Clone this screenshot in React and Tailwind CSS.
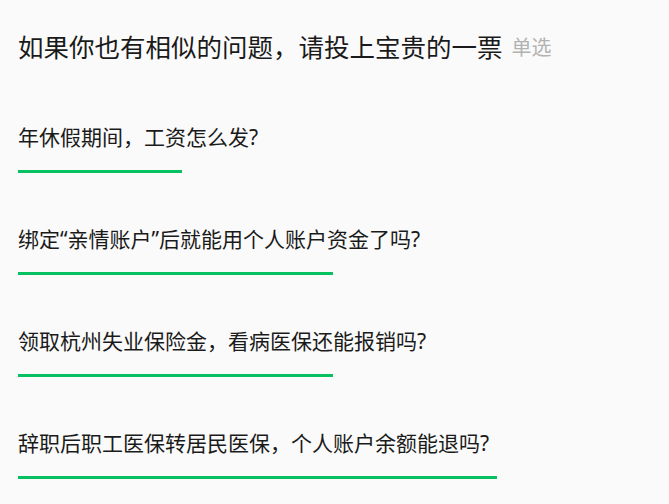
import React from 'react';

const questions = [
  { title: '年休假期间，工资怎么发?', bar: 'w-[164px]' },
  { title: '绑定“亲情账户”后就能用个人账户资金了吗?', bar: 'w-[315px]' },
  { title: '领取杭州失业保险金，看病医保还能报销吗?', bar: 'w-[315px]' },
  { title: '辞职后职工医保转居民医保，个人账户余额能退吗?', bar: 'w-[479px]' },
];

const App = () => {
  return (
    <div
      className="h-screen overflow-hidden w-full bg-[#fafafa] px-[18px] pt-[30px]"
      style={{ fontFamily: '"Noto Sans", "Noto Sans CJK SC", sans-serif' }}
    >
      <div className="flex items-center h-[35px]">
        <h1 className="text-[25.5px] leading-[35px] text-[#1a1a1a] font-normal whitespace-nowrap">
          如果你也有相似的问题，请投上宝贵的一票
        </h1>
        <span className="ml-[9px] text-[20px] text-[#b2b2b2]">单选</span>
      </div>

      <div className="mt-[57px] flex flex-col">
        {questions.map((q) => (
          <div key={q.title} className="h-[102px]">
            <p className="text-[21px] leading-[30px] text-[#1a1a1a] whitespace-nowrap">{q.title}</p>
            <div className={`mt-[18px] h-[3px] bg-[#07c160] ${q.bar}`}></div>
          </div>
        ))}
      </div>
    </div>
  );
};

export default App;
